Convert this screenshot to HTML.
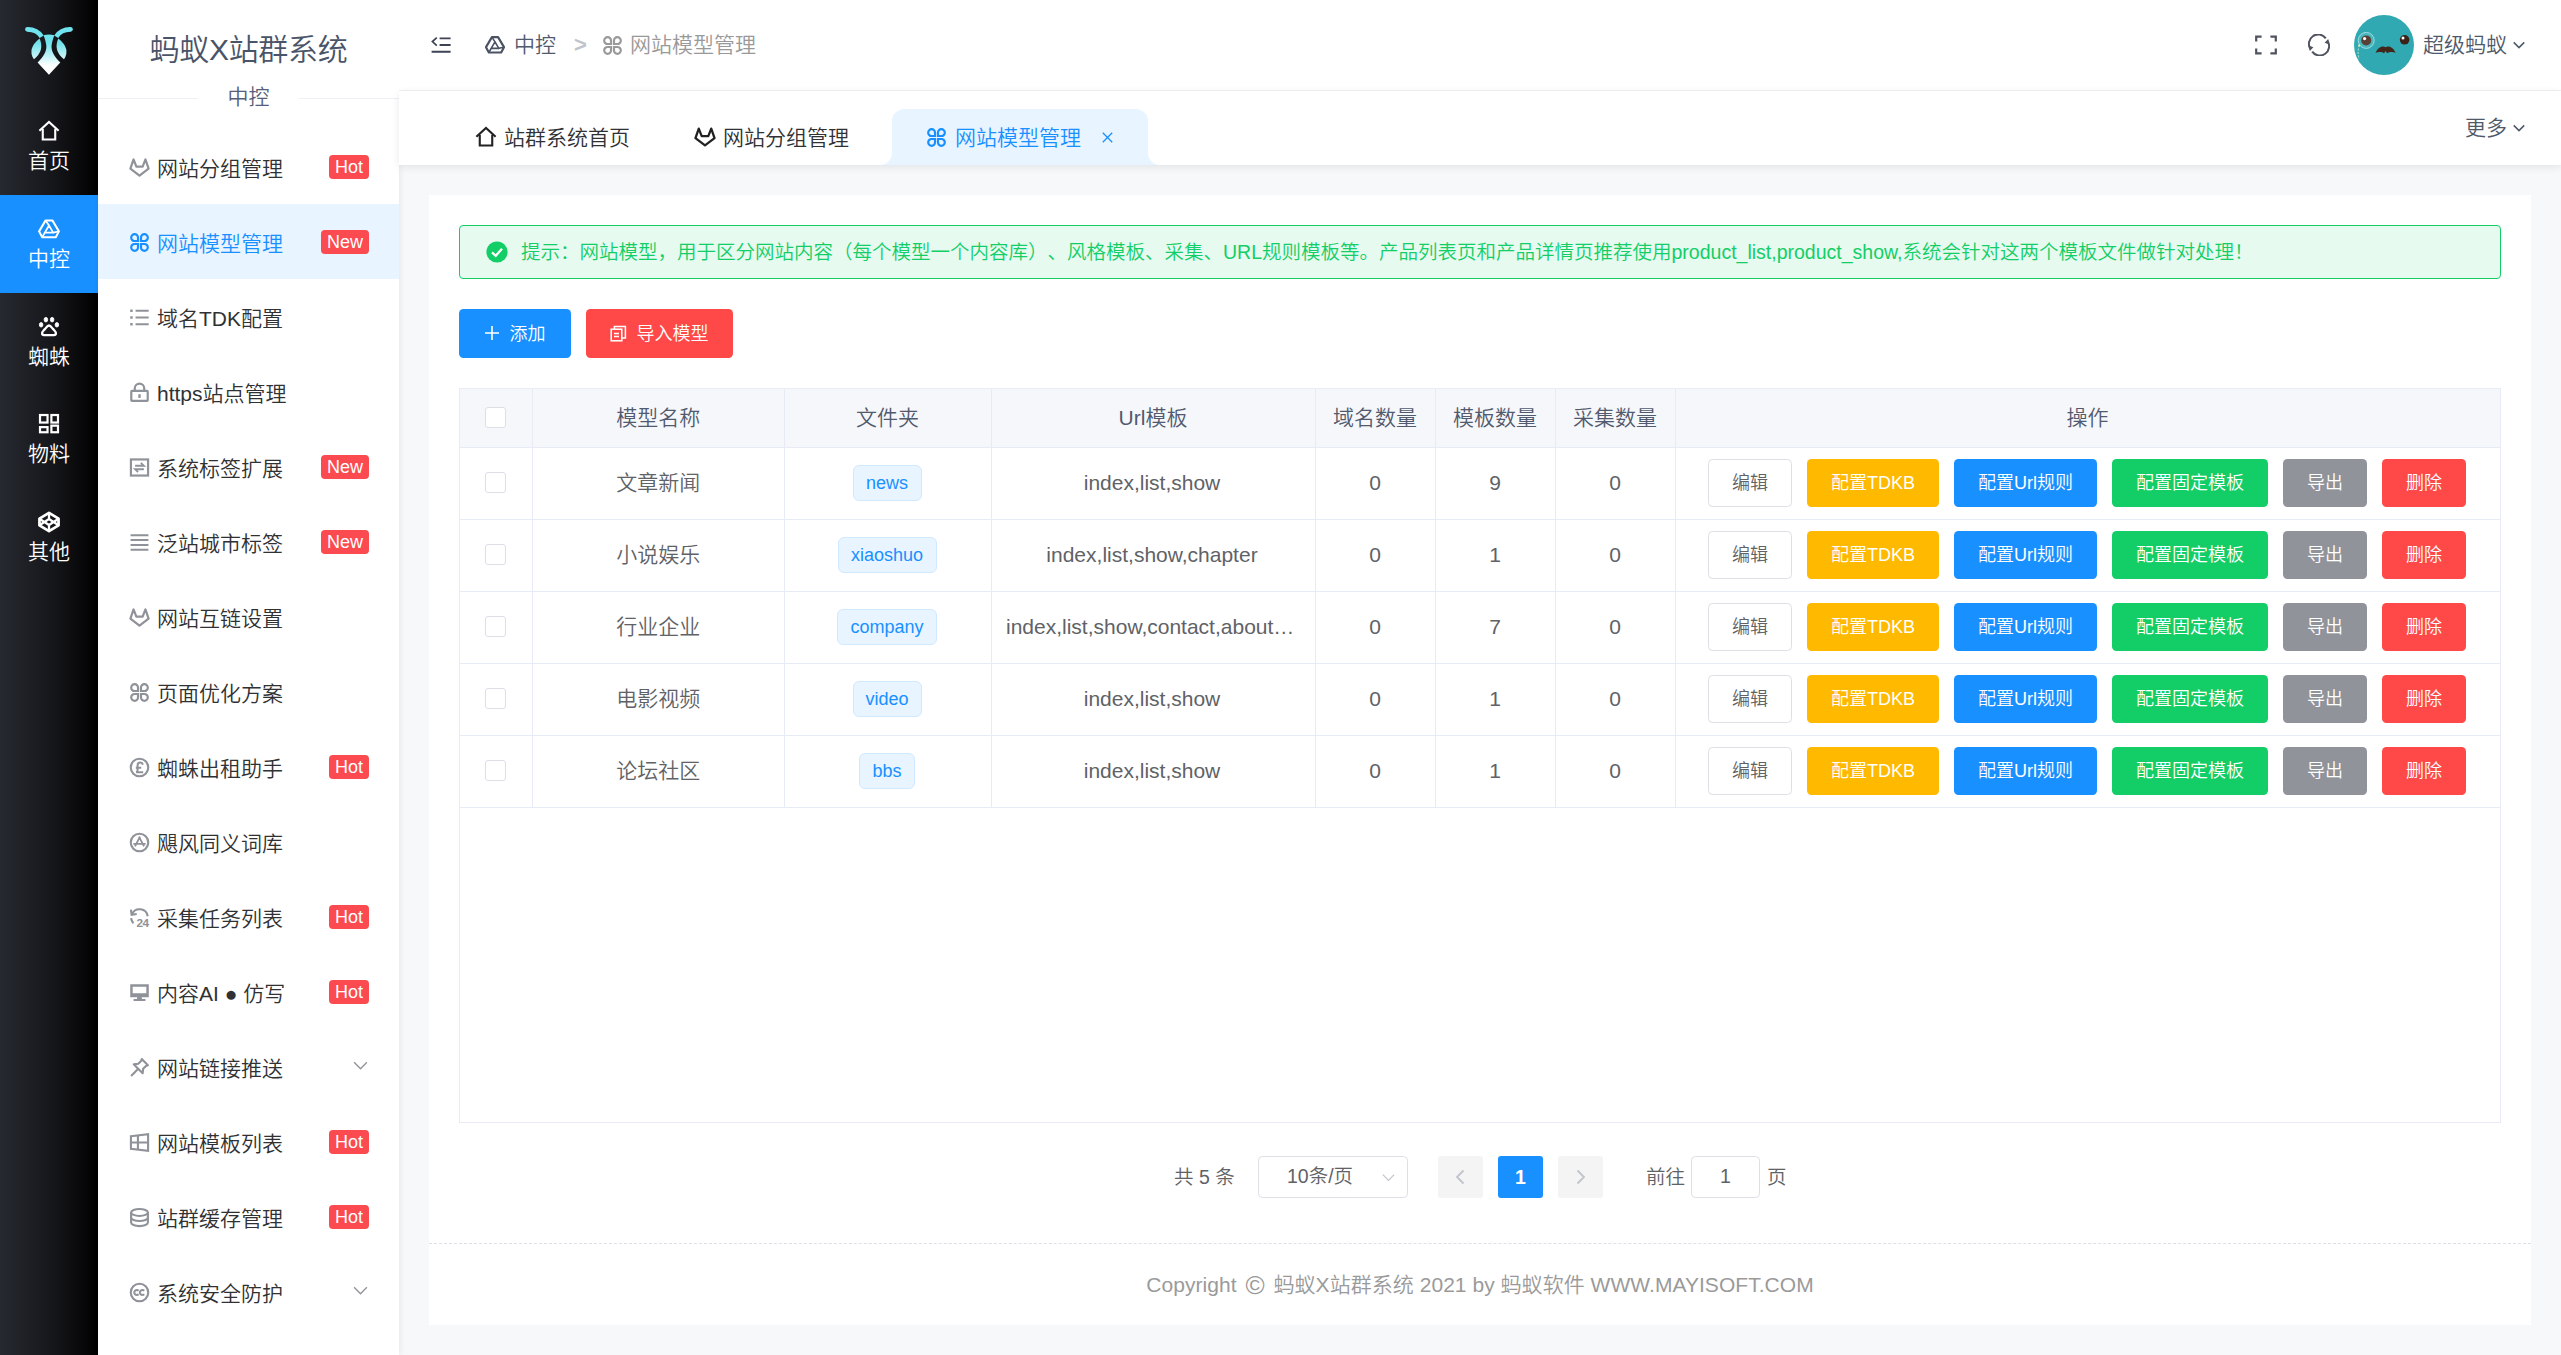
<!DOCTYPE html>
<html lang="zh-CN">
<head>
<meta charset="utf-8">
<title>蚂蚁X站群系统</title>
<style>
*{box-sizing:border-box;margin:0;padding:0}
html,body{width:2561px;height:1355px;overflow:hidden;background:#f6f8f9}
body{font-weight:350;text-spacing-trim:space-all;font-family:"Liberation Sans","Noto Sans CJK SC",sans-serif;font-size:21px;color:#303133;position:relative}
.abs{position:absolute}
svg{display:block}
/* ---------- dark sidebar ---------- */
#side{position:absolute;left:0;top:0;width:98px;height:1355px;background:linear-gradient(90deg,#262930 0%,#15161a 55%,#000 100%)}
#side .logo{position:absolute;left:18px;top:18px;width:64px;height:64px}
#side .it{position:absolute;left:0;width:98px;height:98px;color:#fff;text-align:center}
#side .it.on{background:#1890ff}
#side .it svg{position:absolute;left:38px;top:23px;width:22px;height:22px}
#side .it span{position:absolute;left:0;width:98px;top:47.5px;font-size:21px;line-height:32px}
/* ---------- menu ---------- */
#menu{position:absolute;left:98px;top:0;width:301px;height:1355px;background:#fff;box-shadow:1px 0 6px rgba(0,21,41,.08)}
#menu .title{position:absolute;left:0;top:27px;width:301px;text-align:center;font-size:30px;line-height:46px;color:#4a5468;letter-spacing:-.3px}
#menu .divl{position:absolute;left:0;top:98px;width:301px;height:1px;background:#eef0f3}
#menu .sub{position:absolute;left:100px;top:78px;width:101px;height:40px;background:#fff;text-align:center;font-size:21px;line-height:38px;color:#56607a}
#menu .mi{position:absolute;left:0;width:301px;height:75px;line-height:75px;color:#303133;font-size:21px}
#menu .mi.on{background:#e8f4ff;color:#1890ff}
#menu .mi svg{position:absolute;left:31px;top:27px;width:21px;height:21px;color:#8f9298}
#menu .mi.on svg{color:#1890ff;top:28px}
#menu .mi.on .t{top:2px}
#menu .mi.on .bd{top:26px}
#menu .mi .t{position:absolute;left:59px;top:1px;white-space:nowrap}
#menu .mi .bd{position:absolute;right:30px;top:25px;height:24px;line-height:24px;padding:0 6px;border-radius:4px;background:#fb4a50;color:#fff;font-size:18px}
#menu .mi .ar{position:absolute;left:254px;top:27px;width:17px;height:17px;color:#909399}
/* ---------- header ---------- */
#head{position:absolute;left:399px;top:0;width:2162px;height:91px;background:#fff;border-bottom:1px solid #f2f2f2}
#head .bc{position:absolute;top:0;height:90px;line-height:90px;font-size:21px;white-space:nowrap}
#tabs{position:absolute;left:399px;top:91px;width:2162px;height:74px;background:#fff;box-shadow:0 2px 8px rgba(0,21,41,.085)}
#tabs .tb{position:absolute;top:0;height:74px;line-height:94px;font-size:21px;color:#303133;white-space:nowrap}
/* ---------- card ---------- */
#card{position:absolute;left:429px;top:195px;width:2102px;height:1130px;background:#fff}

/* ---------- card content ---------- */
#alert{position:absolute;left:30px;top:30px;width:2042px;height:54px;border:1.5px solid #13ce66;border-radius:4px;background:#e7faf0;color:#13ce66;font-size:19.5px;line-height:53px;white-space:nowrap}
#alert svg{position:absolute;left:26px;top:15px;width:22px;height:22px}
#alert span{position:absolute;left:61px;top:0}
.btn{position:absolute;height:48px;line-height:48px;border-radius:4.5px;color:#fff;font-size:18px;text-align:center;white-space:nowrap}
.b-blue{background:#1890ff}.b-red{background:#ff4949}.b-yel{background:#ffba00}.b-grn{background:#13ce66}.b-gry{background:#909399}
.b-def{background:#fff;border:1.5px solid #dcdfe6;color:#606266;line-height:46px}
#tbl{position:absolute;left:30px;top:193px;width:2042px;height:735px;box-shadow:inset 0 0 0 1px #e6ebf5;background:#fff}
#tbl .hd{position:absolute;left:1px;top:1px;width:2040px;height:59px;background:#f6f7fa;border-bottom:1px solid #e6ebf5}
#tbl .vl{position:absolute;top:0;width:1px;height:420px;background:#e6ebf5}
#tbl .hl{position:absolute;left:0;width:2042px;height:1px;background:#e6ebf5}
#tbl .th{position:absolute;top:0;height:60px;line-height:59px;text-align:center;color:#515a6e;font-size:21px;white-space:nowrap}
#tbl .row{position:absolute;left:0;width:2042px;height:72px}
#tbl .td{position:absolute;top:0;height:72px;line-height:69px;text-align:center;color:#606266;font-size:21px;white-space:nowrap}
.cb{position:absolute;left:26px;width:21px;height:21px;border:1.5px solid #dcdfe6;border-radius:3px;background:#fff}
.tag{position:absolute;top:17px;height:36px;line-height:35px;border:1.5px solid #d1e9ff;border-radius:6px;background:#e8f4ff;color:#1890ff;font-size:18px;text-align:center}
.row .btn{top:11px}
#pg{position:absolute;left:0;top:961px;width:2102px;height:42px;font-size:19.5px;color:#606266;line-height:42px;white-space:nowrap}
#pg .p{position:absolute;top:0;height:42px}
#foot{position:absolute;left:0;top:1048px;width:2102px;height:82px;border-top:1.5px dashed #dcdfe6;text-align:center;line-height:78px;color:#9a9a9a;font-size:21px;white-space:nowrap;letter-spacing:.04px}
</style>
</head>
<body>
<div id="side">
<svg class="logo" viewBox="18 18 64 64">
<defs><linearGradient id="lg" gradientUnits="userSpaceOnUse" x1="0" y1="29" x2="0" y2="75"><stop offset="0" stop-color="#6fe4ef"/><stop offset=".3" stop-color="#6fe2ec"/><stop offset=".8" stop-color="#fff"/></linearGradient></defs>
<g fill="url(#lg)" stroke="none">
<path d="M43.5 35.2Q48.94 34 54.4 35.2C52.8 39 51.8 43 51.5 46.3C51.5 52 54.8 57.5 60.3 62.4L48.94 74.7L37.6 62.4C43.1 57.5 46.4 52 46.4 46.3C46.1 43 45.1 39 43.5 35.2Z"/>
<path id="lf" d="M39.6 38.5Q26.8 48.7 33.9 59.3Q44.9 50.5 39.6 38.5Z"/>
<use href="#lf" transform="translate(97.88 0) scale(-1 1)"/>
<circle cx="27.45" cy="29.3" r="2.35"/><circle cx="70.43" cy="29.3" r="2.35"/>
</g>
<g fill="none" stroke="url(#lg)" stroke-width="4.7">
<path id="an" d="M27.45 29.3Q37.2 29.3 41.7 36.8"/>
<use href="#an" transform="translate(97.88 0) scale(-1 1)"/>
</g>
</svg>
<div class="it" style="top:97px"><svg viewBox="0 0 24 24" fill="none" stroke="#fff" stroke-width="2.3"><path d="M1.5 11.8L12 2.2L22.5 11.8"/><path d="M5.2 9.5V21.3H18.8V9.5"/></svg><span>首页</span></div>
<div class="it on" style="top:195px;height:98px"><svg viewBox="0 0 24 24" fill="none" stroke="#fff" stroke-width="2.2" stroke-linejoin="round"><path d="M8.3 2.6H15.7L22.8 14.6L19.4 21H4.6L1.2 14.6Z"/><path d="M12 8.2L16.6 16H7.4Z" stroke-width="1.9"/><path d="M8.3 2.6L12 8.2M22.8 14.6L16.6 16M4.6 21L7.4 16" stroke-width="1.9"/></svg><span>中控</span></div>
<div class="it" style="top:293px"><svg viewBox="0 0 24 24" fill="none" stroke="#fff" stroke-width="2.6"><g fill="#fff" stroke-width="1"><ellipse cx="8.6" cy="4" rx="1.9" ry="2.5"/><ellipse cx="15.4" cy="4" rx="1.9" ry="2.5"/><ellipse cx="3.4" cy="9.6" rx="1.9" ry="2.4"/><ellipse cx="20.6" cy="9.6" rx="1.9" ry="2.4"/></g><path stroke-linejoin="round" d="M12 10.4C10.4 10.4 9.4 12 7.8 14C6.2 16 3.8 17.2 4.5 19.4C5.2 21.6 8 20.8 12 20.8S18.8 21.6 19.5 19.4C20.2 17.2 17.800000000000004 16 16.2 14C14.6 12 13.6 10.4 12 10.4Z"/></svg><span>蜘蛛</span></div>
<div class="it" style="top:390px"><svg viewBox="0 0 24 24" fill="none" stroke="#fff" stroke-width="2.4"><rect x="2.2" y="2.2" width="8.2" height="8.2"/><rect x="14.6" y="2.2" width="7.2" height="8.2"/><rect x="2.2" y="15.4" width="8.2" height="5.6"/><rect x="14.6" y="13.8" width="7.2" height="7.2"/></svg><span>物料</span></div>
<div class="it" style="top:488px"><svg viewBox="0 0 24 24" fill="none" stroke="#fff" stroke-width="2.2" stroke-linejoin="round"><path d="M12 2L22.4 8.4V15.6L12 22L1.6 15.6V8.4Z" stroke-width="3"/><path d="M1.6 8.4L12 15.2L22.4 8.4M1.6 15.6L12 8.8L22.4 15.6M12 2V8.8M12 15.2V22" stroke-width="2.5"/></svg><span>其他</span></div>
</div>
<svg width="0" height="0" style="position:absolute">
<symbol id="i-fox" viewBox="0 0 24 24"><path fill="none" stroke="currentColor" stroke-width="2.5" stroke-linejoin="round" d="M5.2 2.8L8.4 11H15.6L18.8 2.8L22.4 13.2L12 21.2L1.6 13.2Z"/></symbol>
<symbol id="i-app" viewBox="0 0 24 24"><g fill="none" stroke="currentColor" stroke-width="2.5"><path d="M10.3 10.3H6.6A3.9 3.9 0 1 1 10.3 6.6Z"/><path d="M13.7 10.3H17.4A3.9 3.9 0 1 0 13.7 6.6Z"/><path d="M10.3 13.7H6.6A3.9 3.9 0 1 0 10.3 17.4Z"/><path d="M13.7 13.7H17.4A3.9 3.9 0 1 1 13.7 17.4Z"/></g></symbol>
<symbol id="i-ul" viewBox="0 0 24 24"><g fill="none" stroke="currentColor" stroke-width="2.3"><path d="M7.5 4.2H22.5M7.5 12H22.5M7.5 19.8H22.5"/><path d="M1.4 4.2H4.2M1.4 12H4.2M1.4 19.8H4.2" stroke-width="2.8"/></g></symbol>
<symbol id="i-lock" viewBox="0 0 24 24"><g fill="none" stroke="currentColor" stroke-width="2.5"><rect x="2.6" y="10.2" width="18.8" height="11.4" rx=".8"/><path d="M6.6 10.2V7.2A5.4 5.4 0 0 1 17.4 7.2V10.2"/><path d="M12 14V18.2" stroke-width="2.8"/></g></symbol>
<symbol id="i-inter" viewBox="0 0 24 24"><g fill="none" stroke="currentColor" stroke-width="2.5"><rect x="2.2" y="2.8" width="19.6" height="18.4"/><path d="M7 10H17L13.6 6.8M17 14H7L10.4 17.2" stroke-width="2.1"/></g></symbol>
<symbol id="i-menu" viewBox="0 0 24 24"><path fill="none" stroke="currentColor" stroke-width="2.3" d="M1.8 3.6H22.2M1.8 9.2H22.2M1.8 14.8H22.2M1.8 20.4H22.2"/></symbol>
<symbol id="i-pound" viewBox="0 0 24 24"><g fill="none" stroke="currentColor"><circle cx="12" cy="12" r="10" stroke-width="2.4"/><path stroke-width="2.3" d="M15.8 8.8C15.4 7.2 14 6.4 12.8 6.4C10.9 6.4 9.8 7.6 9.8 9.4V15C9.8 16.2 9.2 17 8.2 17.3H16.2M7.8 12.2H14"/></g></symbol>
<symbol id="i-astore" viewBox="0 0 24 24"><g fill="none" stroke="currentColor"><circle cx="12" cy="12" r="10" stroke-width="2.4"/><path stroke-width="2.1" d="M12.6 5.2L6.8 16.4M11.4 5.2L17.2 16.4M5 13.6H19"/></g></symbol>
<symbol id="i-h24" viewBox="0 0 24 24"><g fill="none" stroke="currentColor" stroke-width="2.4"><path d="M3.4 8.4A9.4 9.4 0 0 1 21.4 10.6"/><path d="M2.2 3L3 8.8L8.8 8"/><path d="M2.4 12.8A9.6 9.6 0 0 0 5 18.6"/></g><text x="15.4" y="23.2" font-family="Liberation Sans,sans-serif" font-weight="bold" font-size="13.5" text-anchor="middle" fill="currentColor" letter-spacing="-.6">24</text></symbol>
<symbol id="i-desk" viewBox="0 0 24 24"><path fill="currentColor" d="M1.4 2.6H22.6V17.4H14.4L15 19.4H18.8V21.8H5.2V19.4H9L9.6 17.4H1.4ZM4.2 5.4V12.8H19.8V5.4Z"/></symbol>
<symbol id="i-pin" viewBox="0 0 24 24"><g fill="none" stroke="currentColor" stroke-width="2.4" stroke-linejoin="round"><path d="M14.6 2.4L21.6 9.4L19.4 10.2L16.2 13.4L15.6 18.6L5.4 8.4L10.6 7.8L13.8 4.6Z"/><path d="M10 14L2.4 21.6"/></g></symbol>
<symbol id="i-win" viewBox="0 0 24 24"><g fill="none" stroke="currentColor" stroke-width="2.4"><path d="M2.2 4.8L21.8 2.6V21.4L2.2 19.2Z"/><path d="M10.2 3.8V20.2M2.2 12H21.8"/></g></symbol>
<symbol id="i-db" viewBox="0 0 24 24"><g fill="none" stroke="currentColor" stroke-width="2.4"><ellipse cx="12" cy="6.2" rx="9.6" ry="4"/><path d="M2.4 6.2V17.8C2.4 20 6.6 21.8 12 21.8S21.6 20 21.6 17.8V6.2"/><path d="M2.4 12C2.4 14.2 6.6 16 12 16S21.6 14.2 21.6 12"/></g></symbol>
<symbol id="i-cc" viewBox="0 0 24 24"><g fill="none" stroke="currentColor"><circle cx="12" cy="12" r="10" stroke-width="2.4"/><path stroke-width="2.3" d="M11 10A2.9 2.9 0 1 0 11 14M17.4 10A2.9 2.9 0 1 0 17.4 14"/></g></symbol>
<symbol id="i-dthin" viewBox="0 0 24 24"><path fill="none" stroke="currentColor" stroke-width="1.9" d="M3 7.5L12 16.5L21 7.5"/></symbol>
<symbol id="i-down" viewBox="0 0 24 24"><path fill="none" stroke="currentColor" stroke-width="2.6" d="M3 7.5L12 16.5L21 7.5"/></symbol>
</svg>
<div id="menu">
<div class="title">蚂蚁X站群系统</div>
<div class="divl"></div>
<div class="sub">中控</div>
<div class="mi" style="top:130px"><svg><use href="#i-fox"/></svg><span class="t">网站分组管理</span><span class="bd">Hot</span></div>
<div class="mi on" style="top:204px"><svg><use href="#i-app"/></svg><span class="t">网站模型管理</span><span class="bd">New</span></div>
<div class="mi" style="top:280px"><svg><use href="#i-ul"/></svg><span class="t">域名TDK配置</span></div>
<div class="mi" style="top:355px"><svg viewBox="0 0 24 24"><g fill="none" stroke="currentColor" stroke-width="2.5"><rect x="2.6" y="10.2" width="18.8" height="11.4" rx=".8"/><path d="M6.6 10.2V7.2A5.4 5.4 0 0 1 17.4 7.2V10.2"/><path d="M12 14V18.2" stroke-width="2.8"/></g></svg>
<span class="t">https站点管理</span></div>
<div class="mi" style="top:430px"><svg><use href="#i-inter"/></svg><span class="t">系统标签扩展</span><span class="bd">New</span></div>
<div class="mi" style="top:505px"><svg><use href="#i-menu"/></svg><span class="t">泛站城市标签</span><span class="bd">New</span></div>
<div class="mi" style="top:580px"><svg><use href="#i-fox"/></svg><span class="t">网站互链设置</span></div>
<div class="mi" style="top:655px"><svg><use href="#i-app"/></svg><span class="t">页面优化方案</span></div>
<div class="mi" style="top:730px"><svg><use href="#i-pound"/></svg><span class="t">蜘蛛出租助手</span><span class="bd">Hot</span></div>
<div class="mi" style="top:805px"><svg><use href="#i-astore"/></svg><span class="t">飓风同义词库</span></div>
<div class="mi" style="top:880px"><svg><use href="#i-h24"/></svg><span class="t">采集任务列表</span><span class="bd">Hot</span></div>
<div class="mi" style="top:955px"><svg><use href="#i-desk"/></svg><span class="t">内容AI ● 仿写</span><span class="bd">Hot</span></div>
<div class="mi" style="top:1030px"><svg><use href="#i-pin"/></svg><span class="t">网站链接推送</span><svg class="ar"><use href="#i-dthin"/></svg></div>
<div class="mi" style="top:1105px"><svg><use href="#i-win"/></svg><span class="t">网站模板列表</span><span class="bd">Hot</span></div>
<div class="mi" style="top:1180px"><svg><use href="#i-db"/></svg><span class="t">站群缓存管理</span><span class="bd">Hot</span></div>
<div class="mi" style="top:1255px"><svg><use href="#i-cc"/></svg><span class="t">系统安全防护</span><svg class="ar"><use href="#i-dthin"/></svg></div>
</div>
<div id="head">
<svg class="abs" style="left:32px;top:36px;width:20px;height:18px;color:#3c4353" viewBox="0 0 20 18"><g fill="none" stroke="currentColor" stroke-width="1.9"><path d="M8.6 2.4H19.6M8.6 9H19.6M.6 15.8H19.6"/><path d="M5.8 1.6L1.4 5.6L5.8 9.6" stroke-width="1.7"/></g></svg>
<svg class="abs" style="left:86px;top:35px;width:20px;height:20px;color:#4a5263" viewBox="0 0 24 24"><g fill="none" stroke="currentColor" stroke-width="2.6" stroke-linejoin="round"><path d="M8.3 2.6H15.7L22.8 14.6L19.4 21H4.6L1.2 14.6Z"/><path d="M12 8.2L16.6 16H7.4Z" stroke-width="1.9"/><path d="M8.3 2.6L12 8.2M22.8 14.6L16.6 16M4.6 21L7.4 16" stroke-width="1.9"/></g></svg>
<span class="bc" style="left:115px;color:#515a6e">中控</span>
<span class="bc" style="left:175px;color:#bfc3cb;font-size:22px;font-weight:bold">&gt;</span>
<svg class="abs" style="left:203px;top:35px;width:21px;height:21px;color:#999"><use href="#i-app"/></svg>
<span class="bc" style="left:231px;color:#999">网站模型管理</span>
<svg class="abs" style="left:1856px;top:35px;width:22px;height:20px;color:#50545e" viewBox="0 0 22 20"><path fill="none" stroke="currentColor" stroke-width="2.2" d="M1.2 6.6V1.6H6.6M15.4 1.6H20.8V6.6M20.8 13.4V18.4H15.4M6.6 18.4H1.2V13.4"/></svg>
<svg class="abs" style="left:1909px;top:34px;width:22px;height:22px;color:#50545e" viewBox="0 0 22 22"><g fill="none" stroke="currentColor" stroke-width="2"><path d="M2.6 15.2A9.2 9.2 0 0 1 17.8 4.4"/><path d="M19.4 6.8A9.2 9.2 0 0 1 4.2 17.6"/></g><path fill="currentColor" d="M.6 11.4L5.4 13.2L1.8 17ZM21.4 10.6L16.6 8.8L20.2 5Z"/></svg>
<svg class="abs" style="left:1955px;top:15px;width:60px;height:60px" viewBox="0 0 60 60"><circle cx="30" cy="30" r="30" fill="#30a9b2"/><circle cx="12.200000000000001" cy="25.400000000000002" r="8" fill="#48b7bf" stroke="#b9e7ea" stroke-width=".8"/><circle cx="12.200000000000001" cy="25.400000000000002" r="5" fill="#5a3f35"/><circle cx="10.600000000000001" cy="23.6" r="1.6" fill="#fff"/><path d="M5.2 30.200000000000003Q3.2 37 5 44" fill="none" stroke="#dff3d0" stroke-width=".8" stroke-dasharray="2 1.4"/><circle cx="5.2" cy="30.6" r="1" fill="#f5ee9e"/><circle cx="50.6" cy="24.8" r="4.800000000000001" fill="#3a2216"/><circle cx="49" cy="23" r="1.5" fill="#fff"/><path fill="#42261a" d="M31.6 32.2C35 30.200000000000003 39.6 32.6 41.6 37.800000000000004C38.2 36.4 34.6 37.2 33.2 38.2L31.6 36L30 38.2C28.6 37.2 25 36.4 21.6 37.800000000000004C23.6 32.6 28.2 30.200000000000003 31.6 32.2Z"/></svg>
<span class="bc" style="left:2024px;color:#4e5969">超级蚂蚁</span>
<svg class="abs" style="left:2113px;top:38px;width:14px;height:14px;color:#4e5969"><use href="#i-down"/></svg>
</div>
<div id="tabs">
<svg class="abs" style="left:481px;top:0;width:280px;height:74px" viewBox="0 0 280 74"><path fill="#e8f4ff" d="M0 74A12 12 0 0 0 12 62V30A12 12 0 0 1 24 18H256A12 12 0 0 1 268 30V62A12 12 0 0 0 280 74Z"/></svg>
<svg class="abs" style="left:76px;top:35px;width:22px;height:22px" viewBox="0 0 24 24" fill="none" stroke="#222" stroke-width="2.3"><path d="M1.5 11.8L12 2.2L22.5 11.8"/><path d="M5.2 9.5V21.3H18.8V9.5"/></svg>
<span class="tb" style="left:105px">站群系统首页</span>
<svg class="abs" style="left:295px;top:35px;width:22px;height:22px;color:#222"><use href="#i-fox"/></svg>
<span class="tb" style="left:324px">网站分组管理</span>
<svg class="abs" style="left:527px;top:36px;width:21px;height:21px;color:#1890ff"><use href="#i-app"/></svg>
<span class="tb" style="left:556px;color:#1890ff">网站模型管理</span>
<svg class="abs" style="left:703px;top:41px;width:11px;height:11px" viewBox="0 0 11 11"><path fill="none" stroke="#1890ff" stroke-width="1.3" d="M.8 .8L10.2 10.2M10.2 .8L.8 10.2"/></svg>
<span class="tb" style="left:2066px;line-height:74px;color:#4e5969">更多</span>
<svg class="abs" style="left:2113px;top:30px;width:14px;height:14px;color:#4e5969"><use href="#i-down"/></svg>
</div>
<div id="card">
<div id="alert"><svg viewBox="0 0 22 22"><circle cx="11" cy="11" r="10.6" fill="#13ce66"/><path fill="none" stroke="#fff" stroke-width="2.3" d="M6 11.3L9.7 14.8L16 7.8"/></svg><span>提示：网站模型，用于区分网站内容（每个模型一个内容库）、风格模板、采集、URL规则模板等。产品列表页和产品详情页推荐使用product_list,product_show,系统会针对这两个模板文件做针对处理！</span></div>
<div class="btn b-blue" style="left:30px;top:114px;width:112px;height:49px;line-height:50px"><svg class="abs" style="left:25px;top:16px;width:16px;height:16px" viewBox="0 0 16 16"><path stroke="#fff" stroke-width="1.6" d="M8 1V15M1 8H15"/></svg><span style="margin-left:25px">添加</span></div>
<div class="btn b-red" style="left:157px;top:114px;width:147px;height:49px;line-height:50px"><svg class="abs" style="left:24px;top:16px;width:17px;height:17px" viewBox="0 0 17 17"><g fill="none" stroke="#fff" stroke-width="1.5"><rect x="1.2" y="4.2" width="10.6" height="11.6"/><path d="M4.4 4V1.4H15.4V13H12M4 8.4H9M4 11.6H9"/></g></svg><span style="margin-left:26px">导入模型</span></div>
<div id="tbl">
<div class="hd"></div>
<div class="vl" style="left:73px"></div>
<div class="vl" style="left:325px"></div>
<div class="vl" style="left:532px"></div>
<div class="vl" style="left:856px"></div>
<div class="vl" style="left:976px"></div>
<div class="vl" style="left:1096px"></div>
<div class="vl" style="left:1216px"></div>
<div class="cb" style="top:19px"></div>
<div class="th" style="left:73.5px;width:251.5px">模型名称</div>
<div class="th" style="left:325px;width:207px">文件夹</div>
<div class="th" style="left:532px;width:324px">Url模板</div>
<div class="th" style="left:856px;width:120px">域名数量</div>
<div class="th" style="left:976px;width:120px">模板数量</div>
<div class="th" style="left:1096px;width:120px">采集数量</div>
<div class="th" style="left:1216px;width:825px">操作</div>
<div class="row" style="top:60px">
<div class="cb" style="top:24px"></div>
<div class="td" style="left:73.5px;width:251.5px">文章新闻</div>
<span class="tag" style="left:393.5px;width:69px">news</span>
<div class="td" style="left:531px;width:324px">index,list,show</div>
<div class="td" style="left:856px;width:120px">0</div>
<div class="td" style="left:976px;width:120px">9</div>
<div class="td" style="left:1096px;width:120px">0</div>
<span class="btn b-def" style="left:1249px;width:84px">编辑</span>
<span class="btn b-yel" style="left:1348px;width:132px">配置TDKB</span>
<span class="btn b-blue" style="left:1495px;width:143px">配置Url规则</span>
<span class="btn b-grn" style="left:1653px;width:156px">配置固定模板</span>
<span class="btn b-gry" style="left:1824px;width:84px">导出</span>
<span class="btn b-red" style="left:1923px;width:84px">删除</span>
</div>
<div class="hl" style="top:131px"></div>
<div class="row" style="top:132px">
<div class="cb" style="top:24px"></div>
<div class="td" style="left:73.5px;width:251.5px">小说娱乐</div>
<span class="tag" style="left:378.5px;width:99px">xiaoshuo</span>
<div class="td" style="left:531px;width:324px">index,list,show,chapter</div>
<div class="td" style="left:856px;width:120px">0</div>
<div class="td" style="left:976px;width:120px">1</div>
<div class="td" style="left:1096px;width:120px">0</div>
<span class="btn b-def" style="left:1249px;width:84px">编辑</span>
<span class="btn b-yel" style="left:1348px;width:132px">配置TDKB</span>
<span class="btn b-blue" style="left:1495px;width:143px">配置Url规则</span>
<span class="btn b-grn" style="left:1653px;width:156px">配置固定模板</span>
<span class="btn b-gry" style="left:1824px;width:84px">导出</span>
<span class="btn b-red" style="left:1923px;width:84px">删除</span>
</div>
<div class="hl" style="top:203px"></div>
<div class="row" style="top:204px">
<div class="cb" style="top:24px"></div>
<div class="td" style="left:73.5px;width:251.5px">行业企业</div>
<span class="tag" style="left:378.0px;width:100px">company</span>
<div class="td" style="left:532px;width:324px;text-align:left;padding-left:15px">index,list,show,contact,about…</div>
<div class="td" style="left:856px;width:120px">0</div>
<div class="td" style="left:976px;width:120px">7</div>
<div class="td" style="left:1096px;width:120px">0</div>
<span class="btn b-def" style="left:1249px;width:84px">编辑</span>
<span class="btn b-yel" style="left:1348px;width:132px">配置TDKB</span>
<span class="btn b-blue" style="left:1495px;width:143px">配置Url规则</span>
<span class="btn b-grn" style="left:1653px;width:156px">配置固定模板</span>
<span class="btn b-gry" style="left:1824px;width:84px">导出</span>
<span class="btn b-red" style="left:1923px;width:84px">删除</span>
</div>
<div class="hl" style="top:275px"></div>
<div class="row" style="top:276px">
<div class="cb" style="top:24px"></div>
<div class="td" style="left:73.5px;width:251.5px">电影视频</div>
<span class="tag" style="left:393.5px;width:69px">video</span>
<div class="td" style="left:531px;width:324px">index,list,show</div>
<div class="td" style="left:856px;width:120px">0</div>
<div class="td" style="left:976px;width:120px">1</div>
<div class="td" style="left:1096px;width:120px">0</div>
<span class="btn b-def" style="left:1249px;width:84px">编辑</span>
<span class="btn b-yel" style="left:1348px;width:132px">配置TDKB</span>
<span class="btn b-blue" style="left:1495px;width:143px">配置Url规则</span>
<span class="btn b-grn" style="left:1653px;width:156px">配置固定模板</span>
<span class="btn b-gry" style="left:1824px;width:84px">导出</span>
<span class="btn b-red" style="left:1923px;width:84px">删除</span>
</div>
<div class="hl" style="top:347px"></div>
<div class="row" style="top:348px">
<div class="cb" style="top:24px"></div>
<div class="td" style="left:73.5px;width:251.5px">论坛社区</div>
<span class="tag" style="left:400.0px;width:56px">bbs</span>
<div class="td" style="left:531px;width:324px">index,list,show</div>
<div class="td" style="left:856px;width:120px">0</div>
<div class="td" style="left:976px;width:120px">1</div>
<div class="td" style="left:1096px;width:120px">0</div>
<span class="btn b-def" style="left:1249px;width:84px">编辑</span>
<span class="btn b-yel" style="left:1348px;width:132px">配置TDKB</span>
<span class="btn b-blue" style="left:1495px;width:143px">配置Url规则</span>
<span class="btn b-grn" style="left:1653px;width:156px">配置固定模板</span>
<span class="btn b-gry" style="left:1824px;width:84px">导出</span>
<span class="btn b-red" style="left:1923px;width:84px">删除</span>
</div>
<div class="hl" style="top:419px"></div>
</div>
<div id="pg">
<span class="p" style="left:745px">共 5 条</span>
<div class="p" style="left:829px;width:150px;border:1.5px solid #dcdfe6;border-radius:4.5px;line-height:39px"><span style="position:absolute;left:28px">10条/页</span><svg class="abs" style="left:122px;top:13px;width:15px;height:15px;color:#c0c4cc"><use href="#i-dthin"/></svg></div>
<div class="p" style="left:1009px;width:45px;background:#f4f4f5;border-radius:3px"><svg class="abs" style="left:15px;top:13px;width:15px;height:16px" viewBox="0 0 15 16"><path fill="none" stroke="#c0c4cc" stroke-width="1.8" d="M10.5 1.5L4 8L10.5 14.5"/></svg></div>
<div class="p" style="left:1069px;width:45px;background:#1890ff;border-radius:3px;color:#fff;text-align:center;font-weight:bold">1</div>
<div class="p" style="left:1129px;width:45px;background:#f4f4f5;border-radius:3px"><svg class="abs" style="left:15px;top:13px;width:15px;height:16px" viewBox="0 0 15 16"><path fill="none" stroke="#c0c4cc" stroke-width="1.8" d="M4.5 1.5L11 8L4.5 14.5"/></svg></div>
<span class="p" style="left:1217px">前往</span>
<div class="p" style="left:1262px;width:69px;border:1.5px solid #dcdfe6;border-radius:4.5px;line-height:39px;text-align:center">1</div>
<span class="p" style="left:1338px">页</span>
</div>
<div id="foot">Copyright <span style="font-size:26px;position:relative;top:2px;margin:0 3px 0 3px">©</span> 蚂蚁X站群系统 2021 by 蚂蚁软件 WWW.MAYISOFT.COM</div>
</div>
</body>
</html>
